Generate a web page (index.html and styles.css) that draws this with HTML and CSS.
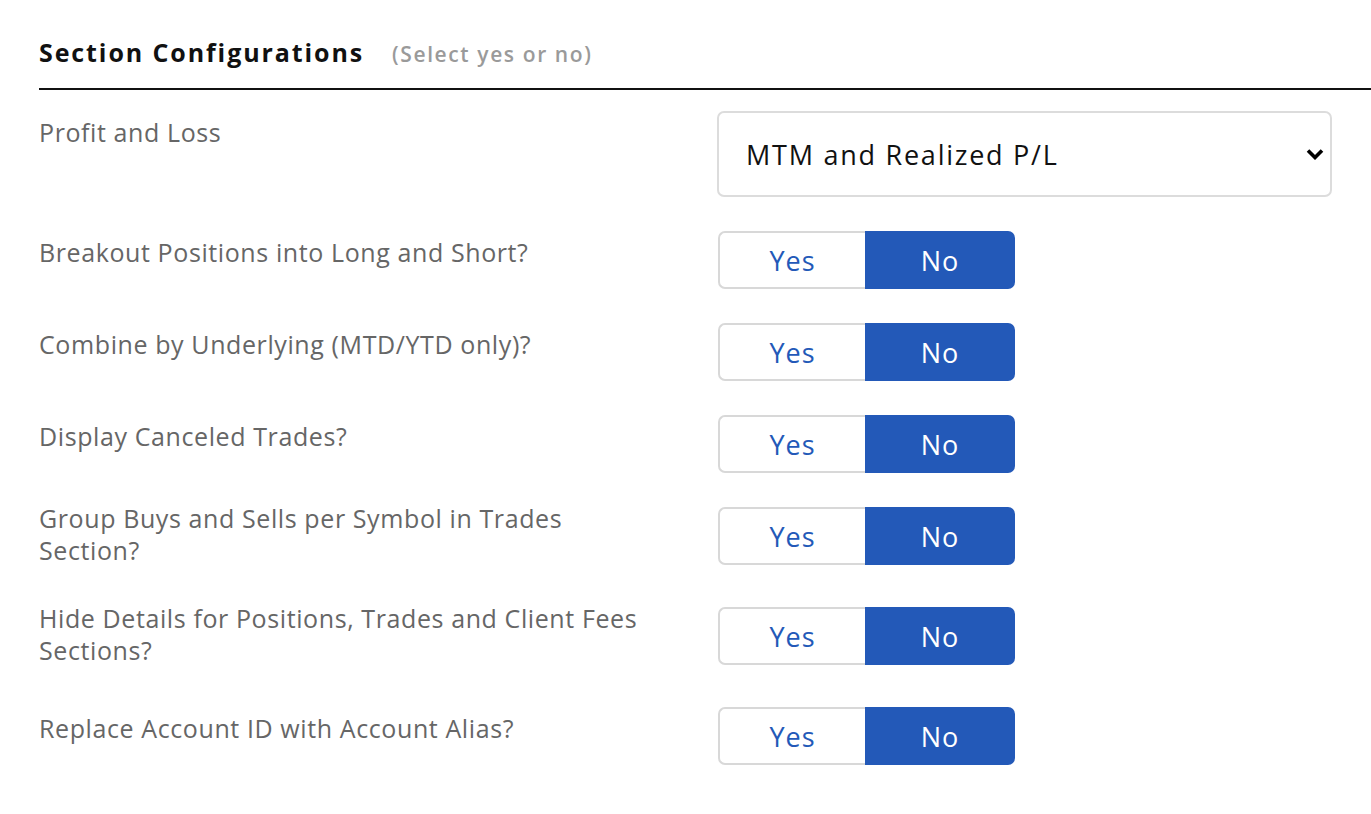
FILE: index.html
```html
<!DOCTYPE html>
<html lang="en">
<head>
<meta charset="utf-8">
<title>Section Configurations</title>
<link rel="stylesheet" href="styles.css">
</head>
<body>
<div class="page">
  <div class="header">
    <h2 class="title">Section Configurations</h2>
    <span class="hint">(Select yes or no)</span>
  </div>
  <div class="rule"></div>

  <div class="rows">
    <div class="row select-row">
      <div class="label">Profit and Loss</div>
      <div class="control">
        <div class="select-wrap">
          <select class="select">
            <option>MTM and Realized P/L</option>
          </select>
          <svg class="chev" width="18" height="12" viewBox="0 0 18 12"><path d="M2 2.5 L9 9.5 L16 2.5" fill="none" stroke="#000" stroke-width="3.6" stroke-linecap="butt" stroke-linejoin="miter"/></svg>
        </div>
      </div>
    </div>

    <div class="row">
      <div class="label">Breakout Positions into Long and Short?</div>
      <div class="control"><div class="toggle"><button class="opt">Yes</button><button class="opt on">No</button></div></div>
    </div>

    <div class="row">
      <div class="label">Combine by Underlying (MTD/YTD only)?</div>
      <div class="control"><div class="toggle"><button class="opt">Yes</button><button class="opt on">No</button></div></div>
    </div>

    <div class="row">
      <div class="label">Display Canceled Trades?</div>
      <div class="control"><div class="toggle"><button class="opt">Yes</button><button class="opt on">No</button></div></div>
    </div>

    <div class="row wrap">
      <div class="label">Group Buys and Sells per Symbol in Trades Section?</div>
      <div class="control"><div class="toggle"><button class="opt">Yes</button><button class="opt on">No</button></div></div>
    </div>

    <div class="row wrap">
      <div class="label">Hide Details for Positions, Trades and Client Fees Sections?</div>
      <div class="control"><div class="toggle"><button class="opt">Yes</button><button class="opt on">No</button></div></div>
    </div>

    <div class="row">
      <div class="label">Replace Account ID with Account Alias?</div>
      <div class="control"><div class="toggle"><button class="opt">Yes</button><button class="opt on">No</button></div></div>
    </div>
  </div>
</div>
</body>
</html>
```

FILE: styles.css
```css
html, body {
  margin: 0;
  padding: 0;
  background: #fff;
}
body {
  font-family: "Open Sans", "Noto Sans", sans-serif;
  color: #666;
}
.page {
  padding: 0 39px;
  overflow: hidden;
}
.header {
  display: flex;
  align-items: baseline;
  height: 88px;
  box-sizing: border-box;
}
.title {
  margin: 0;
  padding-top: 37px;
  font-size: 25px;
  font-weight: 700;
  color: #111;
  line-height: 30px;
  letter-spacing: 1.9px;
}
.hint {
  margin-left: 28px;
  font-size: 21px;
  font-weight: 600;
  color: #9a9a9a;
  letter-spacing: 1.6px;
}
.rule {
  height: 2px;
  background: #111;
  margin-right: -39px;
}
.rows {
  padding-top: 21px;
}
.row {
  display: flex;
  align-items: flex-start;
  margin-bottom: 34px;
}
.row.wrap {
  margin-bottom: 41px;
}
.label {
  width: 679px;
  padding-top: 5px;
  padding-right: 69px;
  box-sizing: border-box;
  font-size: 25px;
  line-height: 32px;
  letter-spacing: 0.6px;
  color: #666;
}
.row.wrap .label {
  padding-top: 0;
  margin-top: -5px;
}
.control {
  flex: 1;
}
.select-wrap {
  position: relative;
  width: 615px;
}
.select {
  display: block;
  appearance: none;
  -webkit-appearance: none;
  width: 100%;
  height: 86px;
  box-sizing: border-box;
  border: 2px solid #dcdcdc;
  border-radius: 7px;
  background: #fff;
  padding: 0 0 0 27px;
  font-family: inherit;
  font-size: 27px;
  letter-spacing: 1.75px;
  color: #111;
  outline: none;
}
.chev {
  position: absolute;
  right: 8px;
  top: 37px;
  pointer-events: none;
}
.toggle {
  display: flex;
  width: 297px;
  height: 58px;
}
.opt {
  font-family: inherit;
  font-size: 27px;
  letter-spacing: 1px;
  margin: 0;
  padding: 0;
  cursor: pointer;
}
.opt:first-child {
  width: 147px;
  background: #fff;
  color: #2359b8;
  border: 2px solid #d8d8d8;
  border-right: none;
  border-radius: 7px 0 0 7px;
}
.opt.on {
  width: 150px;
  background: #2359b8;
  color: #fff;
  border: none;
  border-radius: 0 7px 7px 0;
}
```
